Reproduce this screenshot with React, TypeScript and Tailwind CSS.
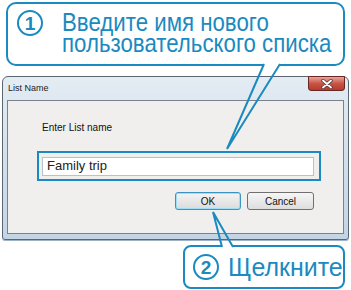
import React from "react";

const BLUE = "#1a8ac0";

function Circled({ n }: { n: string }) {
  return (
    <div className="w-[26px] h-[26px] rounded-full border-2 border-[#1a8ac0] flex items-center justify-center text-[#1a8ac0] text-[19px] font-bold leading-none shrink-0">
      {n}
    </div>
  );
}

export default function App() {
  return (
    <div className="relative w-[351px] h-[290px] bg-white overflow-hidden font-['Liberation_Sans',sans-serif]">
      <div className="flex flex-col">
        {/* top callout */}
        <div className="mt-[2px] ml-[6px] w-[339px] h-[64px] border-2 border-[#1a8ac0] rounded-[10px] flex items-start pl-[9px] pt-[6px]">
          <Circled n="1" />
          <div className="ml-[19px] mt-[2px] text-[#1a8ac0] text-[25px] leading-[21px] whitespace-nowrap origin-left scale-x-[0.89]">
            <div>Введите имя нового</div>
            <div>пользовательского списка</div>
          </div>
        </div>

        {/* dialog window */}
        <div className="mt-[10px] ml-[2px] w-[347px] h-[164px] rounded-t-[6px] rounded-b-[3px] border border-[#5b6672] bg-gradient-to-b from-[#e4ecf3] via-[#d2e0ec] to-[#c3d5e5] flex flex-col shadow-[0_1px_0_#9fb3c4]">
          <div className="h-[23px] flex items-start justify-between pl-[5px] pr-[3px]">
            <span className="mt-[5px] text-[9px] text-[#222]">List Name</span>
            <div className="w-[37px] h-[15px] -mt-px rounded-b-[3px] border border-[#6a2620] bg-gradient-to-b from-[#e6a69c] via-[#c85446] to-[#b8392c] flex items-center justify-center">
              <svg width="12" height="10" viewBox="0 0 12 10">
                <path d="M2 1.5 L10 8.5 M10 1.5 L2 8.5" stroke="#4a3a3a" strokeWidth="3.4" strokeLinecap="round" />
                <path d="M2 1.5 L10 8.5 M10 1.5 L2 8.5" stroke="#ffffff" strokeWidth="1.8" strokeLinecap="round" />
              </svg>
            </div>
          </div>
          <div className="mx-[4px] h-[134px] border border-[#78838e] bg-[#f0efed] flex flex-col">
            <div className="ml-[34px] mt-[19px] text-[10px] text-[#111]">Enter List name</div>
            <div className="ml-[29px] mt-[16px] w-[284px] h-[30px] border-2 border-[#1a8ac0] flex items-center pl-[3px]">
              <div className="w-[272px] h-[19px] border border-[#b3c3cf] bg-white flex items-center pl-[4px] text-[13px] text-[#222]">
                Family trip
              </div>
            </div>
            <div className="flex ml-[167px] mt-[11px] gap-[6px]">
              <div className="w-[66px] h-[18px] rounded-[3px] border border-[#3b95c0] shadow-[inset_0_0_0_1px_#9fdcf5] bg-gradient-to-b from-[#f4f4f4] to-[#dcdcdc] flex items-center justify-center text-[10px] text-[#111]">
                OK
              </div>
              <div className="w-[67px] h-[18px] rounded-[3px] border border-[#707070] bg-gradient-to-b from-[#f6f6f6] to-[#dedede] flex items-center justify-center text-[10px] text-[#111]">
                Cancel
              </div>
            </div>
          </div>
        </div>

        {/* bottom callout */}
        <div className="mt-[5px] ml-[183px] w-[162px] h-[44px] border-2 border-[#1a8ac0] rounded-[8px] flex items-center pl-[8px]">
          <Circled n="2" />
          <span className="ml-[9px] text-[#1a8ac0] text-[26px] leading-none whitespace-nowrap origin-left scale-x-[0.96]">
            Щелкните
          </span>
        </div>
      </div>

      {/* pointer tails */}
      <svg className="absolute inset-0 pointer-events-none" width="351" height="290">
        <rect x="264" y="63" width="16" height="4" fill="#ffffff" />
        <polyline points="264,64 227,149 280,64" fill="none" stroke={BLUE} strokeWidth="2" strokeLinejoin="miter" />
        <rect x="222" y="244" width="11" height="4" fill="#ffffff" />
        <polyline points="222,247 213,212 233,247" fill="none" stroke={BLUE} strokeWidth="2" />
      </svg>
    </div>
  );
}
